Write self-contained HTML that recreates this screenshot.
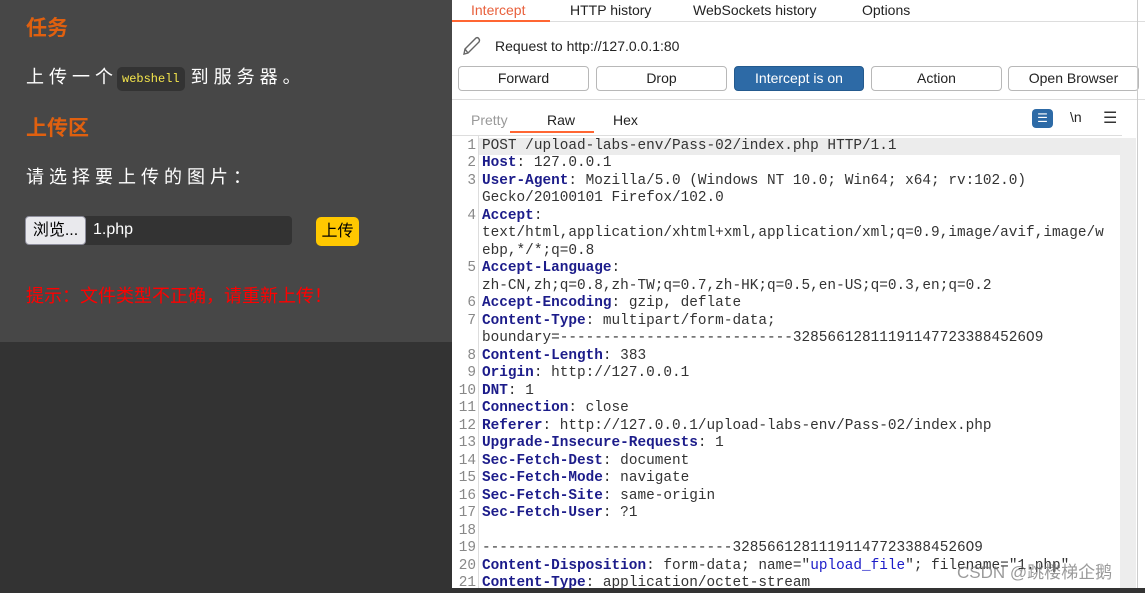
<!DOCTYPE html>
<html><head><meta charset="utf-8"><style>
*{margin:0;padding:0;box-sizing:border-box}
body{width:1145px;height:588px;overflow:hidden;position:relative;background:#333;font-family:"Liberation Sans","Noto Sans CJK SC",sans-serif}
.abs{position:absolute}
#left{left:0;top:0;width:452px;height:342px;background:#474747}
.h{color:#e0600f;font-weight:bold;font-size:21px;left:26px}
.t{color:#fff;font-size:18px;letter-spacing:5px;left:26px}
#right{left:452px;top:0;width:693px;height:588px;background:#fff}
.tab{top:0;font-size:14px;color:#222;line-height:20px}
.btn{top:66px;height:25px;border:1px solid #b8b8b8;border-radius:4px;background:#fff;font-size:14px;color:#222;text-align:center;line-height:23px}
.code{left:0;top:138px;font-family:"Liberation Mono",monospace;font-size:14.4px;line-height:17.48px;white-space:pre;color:#333}
.ln{display:inline-block;width:24px;text-align:right;color:#888;margin-right:6px}
.k{color:#1c1c8a;font-weight:bold}
.b{color:#1c1cc8}
</style></head><body>
<div id="left" class="abs">
<div class="abs h" style="top:12px">任务</div>
<div class="abs t" style="top:63px">上传一个<span style="display:inline-block;background:#333;border-radius:5px;padding:5px 5px;font-family:'Liberation Mono',monospace;font-size:12px;line-height:14px;color:#f5e64c;letter-spacing:0;vertical-align:1px;margin:0 6px 0 -1px">webshell</span>到服务器。</div>
<div class="abs h" style="top:112px">上传区</div>
<div class="abs t" style="top:163px">请选择要上传的图片：</div>
<div class="abs" style="left:25px;top:216px;width:267px;height:29px;background:#333;border-radius:4px"></div>
<div class="abs" style="left:25px;top:216px;width:61px;height:29px;background:#e9e9ed;border:1px solid #8f8f9d;border-radius:4px;font-size:16px;line-height:27px;text-align:center;color:#000">浏览...</div>
<div class="abs" style="left:93px;top:221px;font-size:16px;color:#fff">1.php</div>
<div class="abs" style="left:316px;top:217px;width:43px;height:29px;background:#ffc800;border-radius:5px;font-size:16px;line-height:29px;text-align:center;color:#000">上传</div>
<div class="abs" style="left:26px;top:282px;font-size:18px;color:#f00">提示：文件类型不正确，请重新上传！</div>
</div>
<div id="right" class="abs">
<div class="abs" style="left:0;top:21px;width:693px;height:1px;background:#ddd"></div>
<div class="abs tab" style="left:19px;color:#e8603c">Intercept</div>
<div class="abs" style="left:0;top:20px;width:98px;height:2px;background:#ff6633"></div>
<div class="abs tab" style="left:118px">HTTP history</div>
<div class="abs tab" style="left:241px">WebSockets history</div>
<div class="abs tab" style="left:410px">Options</div>
<svg class="abs" style="left:9px;top:35px" width="22" height="22" viewBox="0 0 22 22"><path d="M3 19 L4 14 L15 3 Q17 2 18 4 Q19 5 18 7 L7 18 Z M4 14 L7 18" fill="none" stroke="#666" stroke-width="1.4"/></svg>
<div class="abs" style="left:43px;top:38px;font-size:14px;color:#222">Request to http://127.0.0.1:80</div>
<div class="abs btn" style="left:6px;width:131px">Forward</div>
<div class="abs btn" style="left:144px;width:131px">Drop</div>
<div class="abs btn" style="left:282px;width:130px;background:#2d6aa6;color:#fff;border-color:#245a8e">Intercept is on</div>
<div class="abs btn" style="left:419px;width:131px">Action</div>
<div class="abs btn" style="left:556px;width:131px">Open Browser</div>
<div class="abs" style="left:0;top:99px;width:693px;height:1px;background:#ddd"></div>
<div class="abs tab" style="left:19px;top:110px;color:#999">Pretty</div>
<div class="abs tab" style="left:95px;top:110px">Raw</div>
<div class="abs" style="left:58px;top:131px;width:84px;height:2px;background:#ff6633"></div>
<div class="abs tab" style="left:161px;top:110px">Hex</div>
<div class="abs" style="left:580px;top:109px;width:21px;height:19px;background:#2d6aa6;border-radius:4px;color:#fff;font-size:12px;text-align:center;line-height:19px">☰</div>
<div class="abs" style="left:618px;top:109px;font-size:14px;color:#222">\n</div>
<div class="abs" style="left:651px;top:108px;font-size:16px;color:#333">☰</div>
<div class="abs" style="left:0;top:135px;width:670px;height:1px;background:#ddd"></div>
<div class="abs" style="left:26px;top:138px;width:642px;height:17px;background:#ececec"></div>
<div class="abs" style="left:26px;top:136px;width:1px;height:452px;background:#ddd"></div>
<div class="abs" style="left:668px;top:138px;width:16px;height:450px;background:#ededed"></div>
<div class="abs" style="left:685px;top:0;width:1px;height:588px;background:#ccc"></div>
<div class="abs code"><span class="ln">1</span>POST /upload-labs-env/Pass-02/index.php HTTP/1.1
<span class="ln">2</span><span class="k">Host</span>: 127.0.0.1
<span class="ln">3</span><span class="k">User-Agent</span>: Mozilla/5.0 (Windows NT 10.0; Win64; x64; rv:102.0)
<span class="ln"></span>Gecko/20100101 Firefox/102.0
<span class="ln">4</span><span class="k">Accept</span>:
<span class="ln"></span>text/html,application/xhtml+xml,application/xml;q=0.9,image/avif,image/w
<span class="ln"></span>ebp,*/*;q=0.8
<span class="ln">5</span><span class="k">Accept-Language</span>:
<span class="ln"></span>zh-CN,zh;q=0.8,zh-TW;q=0.7,zh-HK;q=0.5,en-US;q=0.3,en;q=0.2
<span class="ln">6</span><span class="k">Accept-Encoding</span>: gzip, deflate
<span class="ln">7</span><span class="k">Content-Type</span>: multipart/form-data;
<span class="ln"></span>boundary=---------------------------328566128111911477233884526O9
<span class="ln">8</span><span class="k">Content-Length</span>: 383
<span class="ln">9</span><span class="k">Origin</span>: http://127.0.0.1
<span class="ln">10</span><span class="k">DNT</span>: 1
<span class="ln">11</span><span class="k">Connection</span>: close
<span class="ln">12</span><span class="k">Referer</span>: http://127.0.0.1/upload-labs-env/Pass-02/index.php
<span class="ln">13</span><span class="k">Upgrade-Insecure-Requests</span>: 1
<span class="ln">14</span><span class="k">Sec-Fetch-Dest</span>: document
<span class="ln">15</span><span class="k">Sec-Fetch-Mode</span>: navigate
<span class="ln">16</span><span class="k">Sec-Fetch-Site</span>: same-origin
<span class="ln">17</span><span class="k">Sec-Fetch-User</span>: ?1
<span class="ln">18</span>
<span class="ln">19</span>-----------------------------328566128111911477233884526O9
<span class="ln">20</span><span class="k">Content-Disposition</span>: form-data; name="<span class="b">upload_file</span>"; filename="1.php"
<span class="ln">21</span><span class="k">Content-Type</span>: application/octet-stream</div>
<div class="abs" style="left:505px;top:558px;font-size:17px;color:rgba(120,120,120,.75)">CSDN @跳楼梯企鹅</div>
</div>
</body></html>
